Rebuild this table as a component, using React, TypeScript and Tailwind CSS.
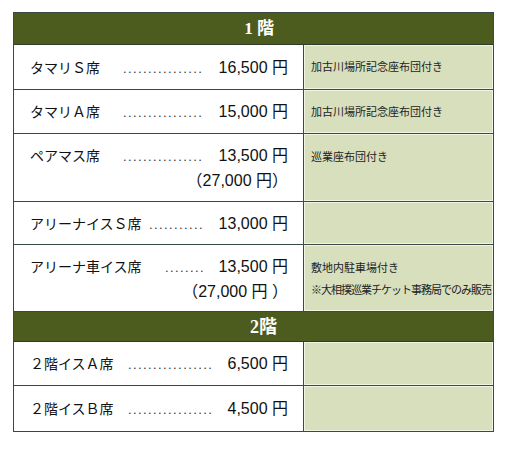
import React from "react";

type Row = {
  name: string;
  nameW: string;
  dots: string;
  price: string;
  price2?: string;
  notes: string[];
  h: string;
  multi: boolean;
  last?: boolean;
};

const floor1: Row[] = [
  { name: "タマリＳ席", nameW: "w-[93px]", dots: "................", price: "16,500", notes: ["加古川場所記念座布団付き"], h: "h-[45px]", multi: false },
  { name: "タマリＡ席", nameW: "w-[93px]", dots: "................", price: "15,000", notes: ["加古川場所記念座布団付き"], h: "h-[44px]", multi: false },
  { name: "ペアマス席", nameW: "w-[93px]", dots: "................", price: "13,500", price2: "（27,000 円）", notes: ["巡業座布団付き"], h: "h-[68px]", multi: true },
  { name: "アリーナイスＳ席", nameW: "w-[119px]", dots: "...........", price: "13,000", notes: [], h: "h-[43px]", multi: false },
  { name: "アリーナ車イス席", nameW: "w-[135px]", dots: "........", price: "13,500", price2: "（27,000 円 ）", notes: ["敷地内駐車場付き", "※大相撲巡業チケット事務局でのみ販売"], h: "h-[67px]", multi: true },
];

const floor2: Row[] = [
  { name: "２階イスＡ席", nameW: "w-[98px]", dots: ".................", price: "6,500", notes: [], h: "h-[44px]", multi: false },
  { name: "２階イスＢ席", nameW: "w-[98px]", dots: ".................", price: "4,500", notes: [], h: "h-[45px]", multi: false, last: true },
];

function PriceRow({ r }: { r: Row }) {
  return (
    <div className={`flex ${r.h} ${r.last ? "" : "border-b border-[#3b4a48]"}`}>
      <div
        className={`w-[290px] shrink-0 bg-white border-r border-[#3b4a48] pl-[16px] pr-[15px] flex flex-col ${
          r.multi ? "pt-[9px]" : "justify-center"
        }`}
      >
        <div className="flex items-baseline h-[25px] leading-[25px]">
          <span className={`${r.nameW} shrink-0 text-[14px] text-[#111]`}>{r.name}</span>
          <span className="shrink-0 whitespace-nowrap text-[13px] tracking-[1.4px] text-[#333]">
            {r.dots}
          </span>
          <span className="ml-auto text-[16px] text-[#111] whitespace-nowrap">
            {r.price} 円
          </span>
        </div>
        {r.price2 && (
          <div className="text-right text-[16px] leading-[25px] text-[#111] whitespace-nowrap">
            {r.price2}
          </div>
        )}
      </div>
      <div
        className={`flex-1 min-w-0 overflow-hidden bg-[#d8dfbd] border border-[#f1f4e2] pl-[6px] flex flex-col ${
          r.multi ? "pt-[11px]" : "justify-center"
        }`}
      >
        {r.notes.map((n, i) => (
          <div
            key={i}
            className={`text-[11px] leading-[22px] text-[#222] whitespace-nowrap ${
              n.length > 14 ? "tracking-[-1px]" : ""
            }`}
          >
            {n}
          </div>
        ))}
      </div>
    </div>
  );
}

export default function App() {
  return (
    <div
      className="w-[518px] h-[461px] bg-white pt-[12px] pl-[13px]"
      style={{ fontFamily: '"Liberation Sans", "Noto Sans CJK JP", sans-serif' }}
    >
      <div className="w-[481px] border border-[#3b4848]">
        <div className="h-[32px] bg-[#4c5c1f] border-b border-[#2f3a2a] flex items-center justify-center pl-[11px]">
          <span
            className="text-white text-[17px] font-bold leading-none"
            style={{ fontFamily: '"Liberation Serif", "Noto Sans CJK JP", serif' }}
          >
            1 階
          </span>
        </div>
        {floor1.map((r, i) => (
          <PriceRow key={i} r={r} />
        ))}
        <div className="h-[30px] bg-[#4c5c1f] border-b border-[#2f3a2a] flex items-center justify-center pl-[20px]">
          <span
            className="text-white text-[18px] font-bold leading-none"
            style={{ fontFamily: '"Liberation Serif", "Noto Sans CJK JP", serif' }}
          >
            2階
          </span>
        </div>
        {floor2.map((r, i) => (
          <PriceRow key={i} r={r} />
        ))}
      </div>
    </div>
  );
}
